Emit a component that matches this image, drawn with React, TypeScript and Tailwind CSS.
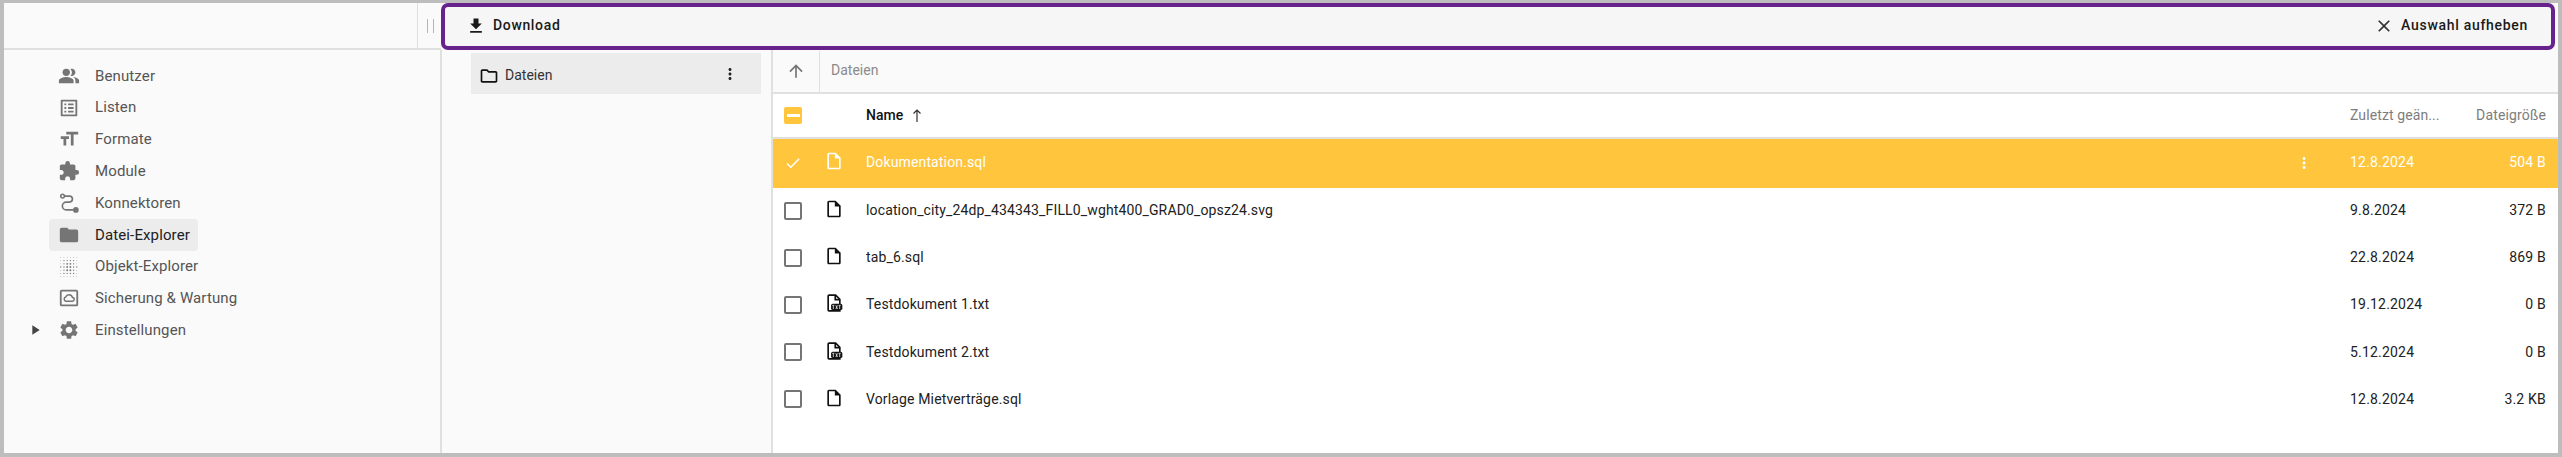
import React from 'react';
import {
  MdArrowUpward,
  MdCheck,
  MdClose,
  MdExtension,
  MdFileDownload,
  MdFolder,
  MdFormatSize,
  MdMoreVert,
  MdOutlineFolder,
  MdOutlineInsertDriveFile,
  MdOutlineListAlt,
  MdPeopleAlt,
  MdPlayArrow,
  MdSettings,
} from 'react-icons/md';

type IconProps = { className?: string };

const BackupIcon = ({ className }: IconProps) => (
  <svg viewBox="0 0 24 24" className={className} fill="none" stroke="currentColor">
    <rect x="3" y="4" width="18" height="16" rx="1" strokeWidth="2" />
    <path d="M8.5 15.5h7a2 2 0 0 0 .3-4 3.9 3.9 0 0 0-7.4-.6 2.4 2.4 0 0 0 .1 4.6z" strokeWidth="1.6" />
  </svg>
);

const RouteIcon = ({ className }: IconProps) => (
  <svg viewBox="0 0 24 24" className={className} fill="none" stroke="currentColor" strokeWidth="1.8">
    <circle cx="5" cy="4.5" r="2" />
    <circle cx="19.5" cy="19.5" r="2.2" fill="currentColor" />
    <path d="M7 4.5h5.5a3.2 3.2 0 0 1 0 6.5H9a3.8 3.8 0 0 0 0 8.5h8" />
  </svg>
);

const DotsIcon = ({ className }: IconProps) => {
  const steps = [3, 6.5, 10, 13.5, 17, 20.5];
  return (
    <svg viewBox="0 0 24 24" className={className} fill="currentColor">
      {steps.map(x =>
        [1.5, 5, 8.5, 12, 15.5, 19, 22.5].map(y => {
          const dist = Math.hypot(x - 11.75, y - 12);
          return <circle key={`${x}-${y}`} cx={x} cy={y} r={dist < 5 ? 1 : dist < 9 ? 0.7 : 0.4} />;
        }),
      )}
    </svg>
  );
};

const TxtFileIcon = ({ className }: IconProps) => (
  <svg viewBox="0 0 24 24" className={className} fill="none">
    <path d="M6 2.5h8l5 5v14H6a1 1 0 0 1-1-1v-17a1 1 0 0 1 1-1z" stroke="currentColor" strokeWidth="2" />
    <path d="M13.5 3v5h5" stroke="currentColor" strokeWidth="2" />
    <rect x="8.5" y="13" width="13.5" height="7.5" rx="2" fill="currentColor" />
    <path d="M10 14.8h2.4M11.2 14.8v4.4M14.2 14.8l2 4.4M16.2 14.8l-2 4.4M17.6 14.8H20M18.8 14.8v4.4" stroke="#fff" strokeWidth="0.9" />
  </svg>
);

const navItems = [
  { label: 'Benutzer', icon: MdPeopleAlt },
  { label: 'Listen', icon: MdOutlineListAlt },
  { label: 'Formate', icon: MdFormatSize },
  { label: 'Module', icon: MdExtension },
  { label: 'Konnektoren', icon: RouteIcon },
  { label: 'Datei-Explorer', icon: MdFolder, active: true },
  { label: 'Objekt-Explorer', icon: DotsIcon },
  { label: 'Sicherung & Wartung', icon: BackupIcon },
  { label: 'Einstellungen', icon: MdSettings, expandable: true },
];

const files = [
  { name: 'Dokumentation.sql', date: '12.8.2024', size: '504 B', selected: true },
  { name: 'location_city_24dp_434343_FILL0_wght400_GRAD0_opsz24.svg', date: '9.8.2024', size: '372 B' },
  { name: 'tab_6.sql', date: '22.8.2024', size: '869 B' },
  { name: 'Testdokument 1.txt', date: '19.12.2024', size: '0 B', txt: true },
  { name: 'Testdokument 2.txt', date: '5.12.2024', size: '0 B', txt: true },
  { name: 'Vorlage Mietverträge.sql', date: '12.8.2024', size: '3.2 KB' },
];

export default function App() {
  return (
    <div className="h-[457px] w-[2562px] overflow-hidden border-t-[3px] border-r-[4px] border-b-[4px] border-l-[4px] border-[#bdbdbd] bg-[#fafafa] font-['Roboto',sans-serif] text-[14px] text-[#212121]">
      <div className="flex h-[47px]">
        <div className="flex w-[437px] shrink-0 border-b-2 border-[#e0e0e0]">
          <div className="w-[414px] border-r border-[#e0e0e0]" />
          <div className="flex flex-1 items-center justify-center gap-[5px] pl-[1px]">
            <div className="h-[14px] w-[1px] bg-[#b5b5b5]" />
            <div className="h-[14px] w-[1px] bg-[#b5b5b5]" />
          </div>
        </div>
        <div className="mr-[3px] flex flex-1 items-center justify-between rounded-[7px] border-[4px] border-[#68228b] bg-[#f6f6f6] pr-[23px] pb-[2px] pl-[21px] font-medium tracking-[0.65px] text-[#1a1a1a]">
          <div className="flex items-center gap-[7px]">
            <MdFileDownload className="size-[20px]" />
            <span>Download</span>
          </div>
          <div className="flex items-center gap-[7px]">
            <MdClose className="size-[20px] text-[#333]" />
            <span className="tracking-[0.7px]">Auswahl aufheben</span>
          </div>
        </div>
      </div>

      <div className="flex h-[403px]">
        <nav className="flex w-[436px] shrink-0 flex-col pt-[10px] pl-[45px] text-[15px] tracking-[0.12px]">
          {navItems.map(item => (
            <div
              key={item.label}
              className={`relative flex h-[31.8px] w-fit items-center gap-[15px] rounded-[4px] pr-[8px] pl-[9px] ${item.active ? 'bg-[#ececec] text-[#212121]' : 'text-[#555]'}`}
            >
              {item.expandable && <MdPlayArrow className="absolute top-[8px] left-[-22px] size-[16px] text-[#444]" />}
              <item.icon className="size-[22px] shrink-0 text-[#757575]" />
              <span className="whitespace-nowrap">{item.label}</span>
            </div>
          ))}
        </nav>

        <div className="w-[333px] shrink-0 border-r-2 border-l-2 border-[#e0e0e0] pt-[3px] pr-[10px] pl-[29px]">
          <div className="flex h-[41px] items-center justify-between bg-[#ececec] pr-[22px] pl-[8px]">
            <div className="flex items-center gap-[6px] pt-[4px]">
              <MdOutlineFolder className="size-[20px] text-[#111]" />
              <span className="text-[#333]">Dateien</span>
            </div>
            <MdMoreVert className="size-[18px] text-[#222]" />
          </div>
        </div>

        <div className="flex min-w-0 flex-1 flex-col">
          <div className="flex h-[44px] shrink-0 items-center border-b-2 border-[#e0e0e0]">
            <div className="flex h-[41px] w-[47px] items-center justify-center border-r border-[#e0e0e0]">
              <MdArrowUpward className="size-[20px] text-[#757575]" />
            </div>
            <span className="pb-[2px] pl-[11px] text-[#8a8a8a]">Dateien</span>
          </div>

          <div className="flex min-h-0 flex-1 flex-col bg-white">
            <div className="flex h-[45px] shrink-0 items-center border-b-2 border-[#e0e0e0] pr-[12px] font-medium">
              <div className="flex w-[93px] shrink-0 pl-[11px]">
                <div className="flex h-[17px] w-[18px] items-center justify-center rounded-[2px] bg-[#ffc53d]">
                  <div className="h-[3px] w-[13px] bg-white" />
                </div>
              </div>
              <div className="flex flex-1 items-center gap-[7px] text-[#111]">
                Name
                <svg viewBox="0 0 14 14" className="size-[14px] text-[#333]" fill="none" stroke="currentColor" strokeWidth="1.2">
                  <path d="M7 1v12M3.5 4.5 7 1l3.5 3.5" />
                </svg>
              </div>
              <div className="w-[124px] font-normal tracking-[0.1px] text-[#7d7d7d]">Zuletzt geän...</div>
              <div className="w-[72px] text-right font-normal tracking-[0.15px] text-[#7d7d7d]">Dateigröße</div>
            </div>

            {files.map(file => {
              const FileIcon = file.txt ? TxtFileIcon : MdOutlineInsertDriveFile;
              return (
                <div
                  key={file.name}
                  className={`flex shrink-0 items-center pr-[12px] ${file.selected ? 'h-[49px] bg-[#ffc53d] pb-[2px] text-white' : 'h-[47.2px] pb-[2px] text-[#212121]'}`}
                >
                  <div className="flex w-[51px] shrink-0 pl-[11px]">
                    {file.selected ? (
                      <MdCheck className="size-[18px] text-white" />
                    ) : (
                      <div className="size-[18px] rounded-[2px] border-2 border-[#757575]" />
                    )}
                  </div>
                  <div className="flex w-[42px] shrink-0">
                    <FileIcon className={`mb-[3px] size-[20px] ${file.selected ? 'text-white' : 'text-[#111]'}`} />
                  </div>
                  <div className="flex-1 truncate tracking-[0.14px]">{file.name}</div>
                  {file.selected && <MdMoreVert className="mr-[37px] size-[18px] text-white" />}
                  <div className="w-[124px] tracking-[0.2px]">{file.date}</div>
                  <div className="w-[72px] text-right tracking-[0.2px]">{file.size}</div>
                </div>
              );
            })}
          </div>
        </div>
      </div>
    </div>
  );
}
